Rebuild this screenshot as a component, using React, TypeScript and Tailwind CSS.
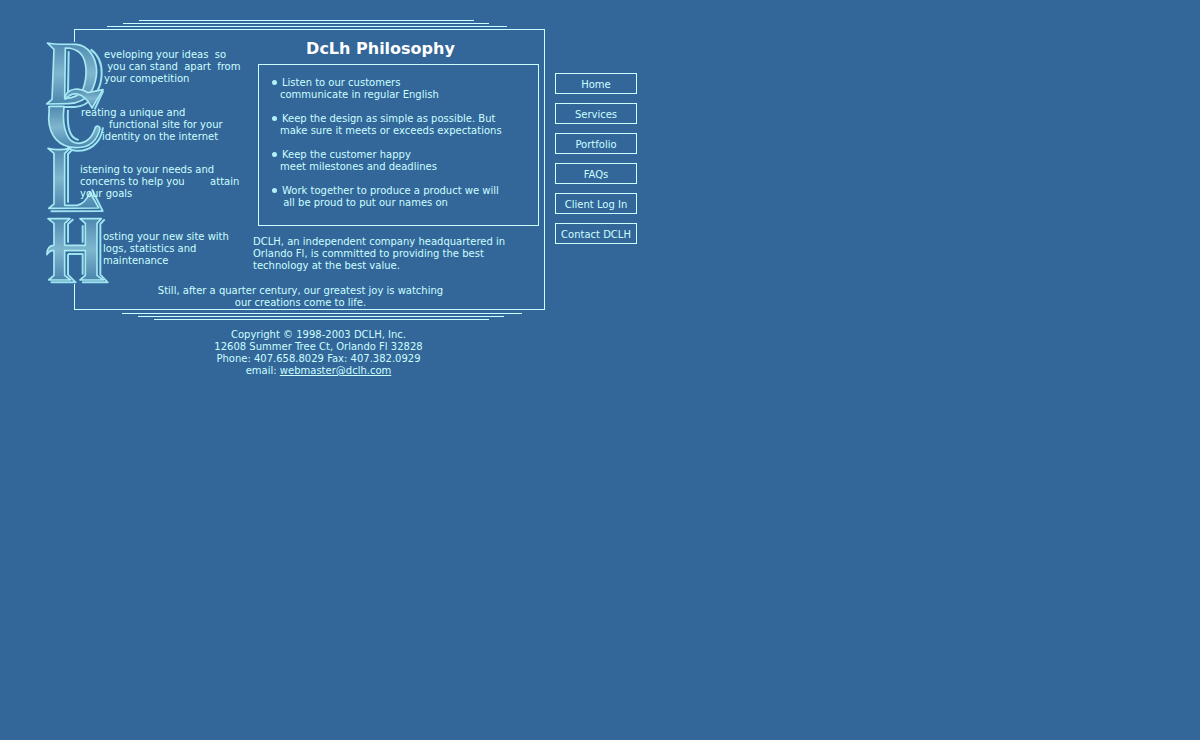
const NAV_LINKS = ['Home', 'Services', 'Portfolio', 'FAQs', 'Client Log In', 'Contact DCLH'];

const GOALS = [
  ['Listen to our customers', 'communicate in regular English'],
  ['Keep the design as simple as possible. But', 'make sure it meets or exceeds expectations'],
  ['Keep the customer happy', 'meet milestones and deadlines'],
  ['Work together to produce a product we will', ' all be proud to put our names on'],
];

const LETTER_D =
  'M22 39 C48 45 80 42 108 43 C144 46 168 80 170 122 C170 150 162 170 152 188 C136 210 112 220 84 221 L20 222 L36 208 L42 58 Z M76 54 L74 205 C100 205 118 196 128 180 C136 160 139 140 138 118 C136 76 114 54 76 54 Z';
const LETTER_C =
  'M28 229 L72 229 C69 256 70 290 80 312 C88 332 100 340 116 340 C142 338 158 322 166 292 C170 286 180 288 180 296 C170 338 144 354 108 353 C56 352 28 316 26 268 Z';
const C_HOOK = 'M76 196 C88 174 116 172 144 188 L189 179 L156 234 C146 214 134 196 112 192 C98 190 86 196 76 208 Z';
const LETTER_L =
  'M24 355 C44 360 66 360 90 355 L74 370 L74 526 L110 526 C130 524 142 506 150 486 L176 534 L26 535 L42 522 L42 370 Z';
const LETTER_H =
  'M24 566 L90 566 L74 580 L74 646 L136 646 L136 580 L120 566 L184 566 L171 580 L171 736 L190 750 L120 750 L136 736 L136 662 L74 662 L74 736 L92 750 L26 750 L42 736 L42 662 C32 660 26 665 21 674 C20 654 30 646 42 646 L42 580 Z';

function Initials() {
  return (
    <svg
      className="absolute -left-[31px] top-3 h-[242px] w-[66px]"
      viewBox="12 36 198 726"
      role="img"
      aria-label="D C L H"
    >
      <defs>
        <linearGradient id="steel" x1="0" y1="0" x2="0" y2="1">
          <stop offset="0" stopColor="#5089b0" />
          <stop offset="0.5" stopColor="#7fb6ce" />
          <stop offset="1" stopColor="#4c85ad" />
        </linearGradient>
      </defs>
      <rect x="96" y="36" width="16" height="726" fill="#336699" />
      <g fill="none" stroke="#9ce3ef" strokeWidth="6" strokeLinejoin="round">
        <path d="M152 58 C174 74 186 100 185 132 C184 156 180 170 172 182" />
        <path d="M86 64 L84 190" />
        <path d="M24 231 L104 231 C130 229 146 218 156 204" />
        <path d="M84 214 C94 202 112 200 124 208" />
        <path d="M190 182 L164 238" />
        <path d="M84 240 C80 300 92 326 116 330 M189 292 C182 344 144 365 108 362 C98 361 90 358 82 352" />
        <path d="M98 358 L84 372 L84 518 M156 478 L188 543 L32 544" />
        <path d="M100 568 L84 582 L84 638 M128 638 L128 586 M194 568 L181 582 L181 734 L203 757 L126 757 M84 672 L84 734 L107 757 L32 757 M84 672 L128 672 L128 734" />
      </g>
      <g fill="url(#steel)" fillRule="evenodd" stroke="#a5e9f3" strokeWidth="5" strokeLinejoin="round">
        <path d={LETTER_C} />
        <path d={LETTER_D} />
        <path d={C_HOOK} />
        <path d={LETTER_L} />
        <path d={LETTER_H} />
      </g>
    </svg>
  );
}

function Promises() {
  return (
    <div className="relative w-[178px] shrink-0 whitespace-pre pt-[19px]">
      <p className="pl-[29px]">
        {'eveloping your ideas  so\n you can stand  apart  from\nyour competition'}
      </p>
      <p className="mt-[22px] pl-[6px]">
        {'reating a unique and\n'}
        <span className="pl-7">functional site for your</span>
        {'\n'}
        <span className="pl-[21px]">identity on the internet</span>
      </p>
      <p className="mt-[21px] pl-[5px]">
        {'istening to your needs and\nconcerns to help you        attain\nyour goals'}
      </p>
      <p className="mt-[31px] pl-7">
        {'osting your new site with\nlogs, statistics and\nmaintenance'}
      </p>
    </div>
  );
}

function Philosophy() {
  return (
    <div className="min-w-0 flex-1">
      <h1 className="pr-9 pt-2 text-center text-base leading-[22px] font-bold text-white">
        DcLh Philosophy
      </h1>
      <ul className="mx-[5px] mt-1 flex flex-col gap-3 border border-[#ccffff] pt-3 pb-4 pl-[21px]">
        {GOALS.map(([first, second]) => (
          <li key={first} className="relative whitespace-pre">
            <span className="absolute -left-2 top-[3px] size-[5px] rounded-full bg-[#b4f0f8]" />
            <span className="pl-[2px]">{first}</span>
            {'\n'}
            {second}
          </li>
        ))}
      </ul>
      <p className="mt-[10px] whitespace-pre">
        {'DCLH, an independent company headquartered in\nOrlando Fl, is committed to providing the best\ntechnology at the best value.'}
      </p>
    </div>
  );
}

export default function App() {
  return (
    <div className="min-h-screen bg-[#336699] pt-5 pl-[74px] font-['Verdana','DejaVu_Sans',sans-serif] text-[10px] leading-3 text-[#ccffff]">
      <div className="flex items-start gap-[10px]">
        <div className="w-full max-w-[471px]">
          <div className="flex flex-col gap-[2px] pb-[2px]">
            <div className="mr-[71px] ml-[65px] h-px bg-[#ccffff]" />
            <div className="mr-14 ml-[49px] h-px bg-[#ccffff]" />
            <div className="mr-[38px] ml-[33px] h-px bg-[#ccffff]" />
          </div>

          <main className="relative border border-[#ccffff]">
            <Initials />
            <div className="flex">
              <Promises />
              <Philosophy />
            </div>
            <p className="mt-[13px] pr-[18px] text-center">
              Still, after a quarter century, our greatest joy is watching
              <br />
              our creations come to life.
            </p>
          </main>

          <div className="flex flex-col gap-[2px] pt-[3px]">
            <div className="mr-[23px] ml-12 h-px bg-[#ccffff]" />
            <div className="mr-[41px] ml-16 h-px bg-[#ccffff]" />
            <div className="mr-14 ml-20 h-px bg-[#ccffff]" />
          </div>

          <footer className="mt-[9px] ml-[18px] text-center">
            <p>Copyright © 1998-2003 DCLH, Inc.</p>
            <p>12608 Summer Tree Ct, Orlando Fl 32828</p>
            <p>Phone: 407.658.8029 Fax: 407.382.0929</p>
            <p>
              email:{' '}
              <a href="mailto:webmaster@dclh.com" className="underline">
                webmaster@dclh.com
              </a>
            </p>
          </footer>
        </div>

        <nav className="mt-[53px] flex w-[82px] shrink-0 flex-col gap-[9px]">
          {NAV_LINKS.map((label) => (
            <a
              key={label}
              href="#"
              className="border border-[#ccffff] pt-[5px] pb-[2px] text-center whitespace-nowrap"
            >
              {label}
            </a>
          ))}
        </nav>
      </div>
    </div>
  );
}
